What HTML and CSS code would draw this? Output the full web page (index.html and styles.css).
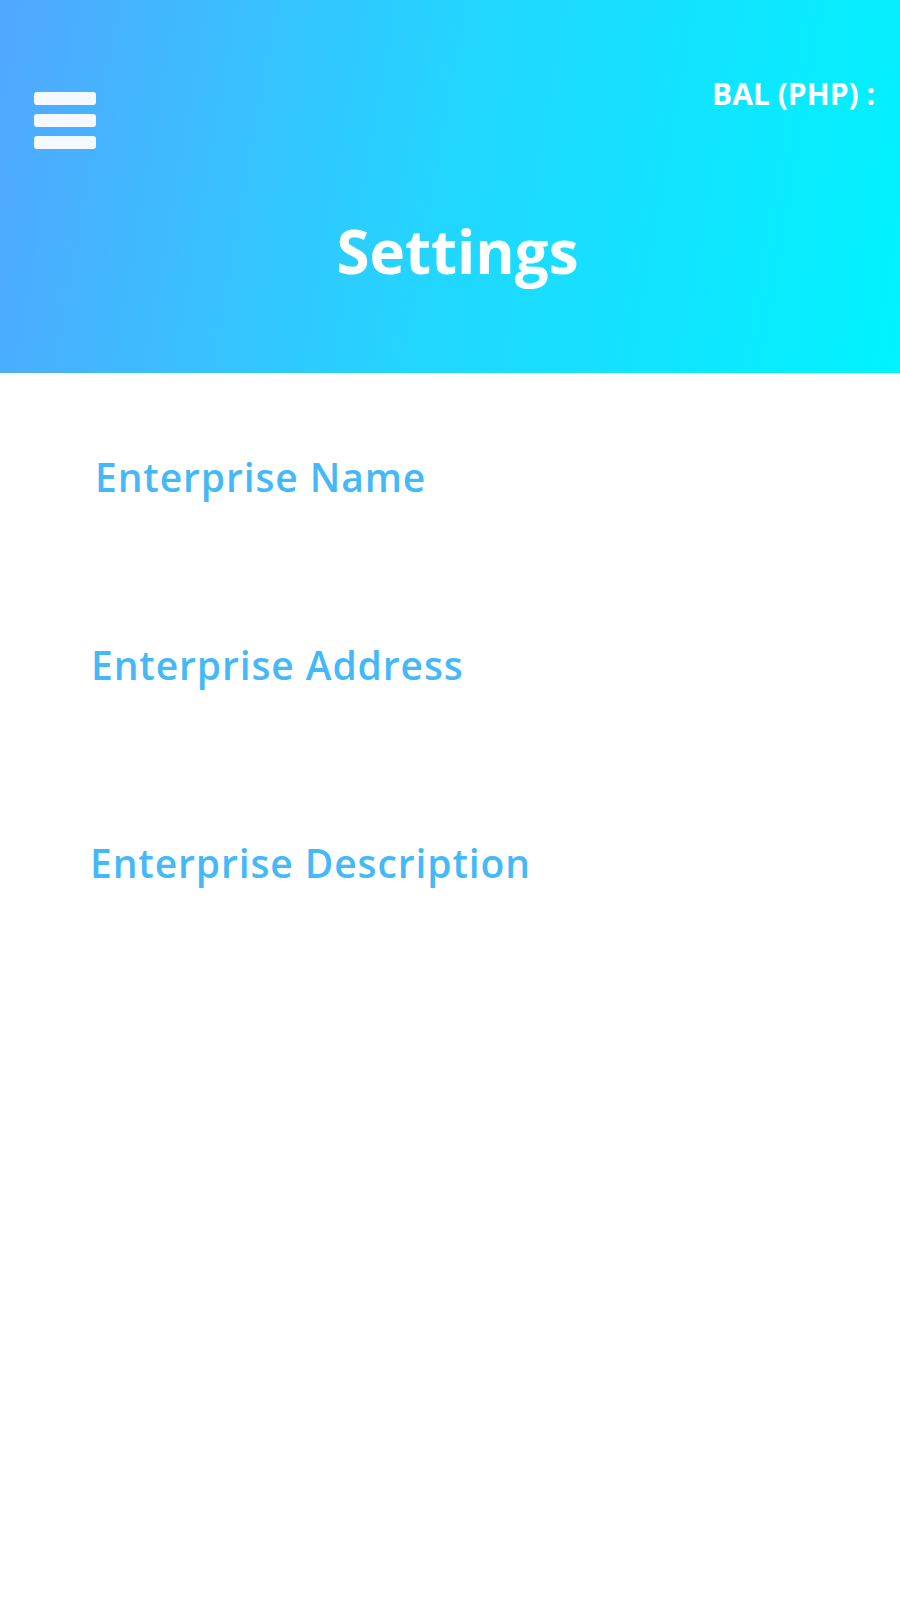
FILE: index.html
```html
<!DOCTYPE html>
<html>
<head>
<meta charset="utf-8">
<link rel="stylesheet" href="styles.css">
</head>
<body>
<header class="header">
  <div class="topbar">
    <div class="menu">
      <span class="bar"></span>
      <span class="bar"></span>
      <span class="bar"></span>
    </div>
    <div class="balance">BAL (PHP) :</div>
  </div>
  <h1 class="title">Settings</h1>
</header>
<main class="content">
  <div class="label label-name">Enterprise Name</div>
  <div class="label label-address">Enterprise Address</div>
  <div class="label label-desc">Enterprise Description</div>
</main>
</body>
</html>
```
FILE: styles.css
```css
* { box-sizing: border-box; }
html, body { margin: 0; padding: 0; background: #fff; }
body {
  width: 900px;
  height: 1600px;
  font-family: "Open Sans", "Noto Sans", sans-serif;
}
.header {
  height: 373px;
  background: linear-gradient(100deg, #52a7fe 0%, #22d6ff 50%, #00f3ff 100%);
  color: #fff;
  display: flex;
  flex-direction: column;
}
.topbar {
  display: flex;
  justify-content: space-between;
  align-items: flex-start;
  padding: 74px 25px 0 34px;
}
.menu {
  display: flex;
  flex-direction: column;
  gap: 9px;
  padding-top: 18px;
}
.bar {
  display: block;
  width: 62px;
  height: 13px;
  border-radius: 3px;
  background: #f4f9ff;
}
.balance {
  font-size: 30px;
  font-weight: 700;
  line-height: 40px;
}
.title {
  margin: 0;
  margin-top: 62px;
  padding-left: 15px;
  text-align: center;
  font-size: 60px;
  font-weight: 700;
  line-height: 80px;
}
.content {
  display: flex;
  flex-direction: column;
  align-items: flex-start;
}
.label {
  color: #45b9f8;
  font-size: 39px;
  font-weight: 600;
  letter-spacing: 0.9px;
  line-height: 54px;
}
.label-name { margin: 77px 0 0 95px; }
.label-address { margin: 134px 0 0 91px; }
.label-desc { margin: 144px 0 0 90px; }
```
